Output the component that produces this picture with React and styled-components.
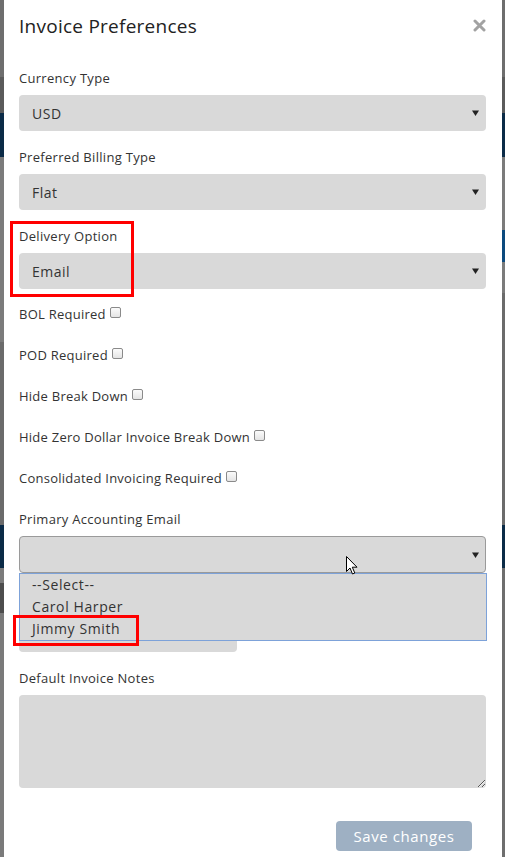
import React from "react";
import styled, { createGlobalStyle } from "styled-components";

const Global = createGlobalStyle`
  html, body { margin: 0; padding: 0; }
  body {
    min-height: 857px;
    font-family: "Open Sans", "Liberation Sans", sans-serif;
    background:
      linear-gradient(to bottom,
        #6e6e6e 0 77px, #5b5b5b 77px 113px, #0b2b47 113px 157px,
        #7b7b7b 157px 342px, #6b6b6b 342px 525px, #0b2b47 525px 568px,
        #7b7b7b 568px 583px, #4d4d4d 583px 613px, #7a7a7a 613px) left top / 50% 100% no-repeat,
      linear-gradient(to bottom,
        #6e6e6e 0 77px, #5b5b5b 77px 113px, #0b2b47 113px 157px,
        #7b7b7b 157px 230px, #0c4a7e 230px 262px, #7b7b7b 262px 293px,
        #6b6b6b 293px 525px, #0b2b47 525px 568px, #6e6e6e 568px) right top / 50% 100% no-repeat;
  }
`;

const Modal = styled.div`
  margin: 0 3px 0 4px;
  background: #fff;
  min-height: 857px;
  box-sizing: border-box;
  color: #333;
`;

const Header = styled.div`
  display: flex;
  align-items: center;
  justify-content: space-between;
  height: 52px;
  padding: 0 16px 0 15px;
  box-sizing: border-box;
`;

const Title = styled.h4`
  margin: 0;
  font-size: 19px;
  font-weight: 500;
  letter-spacing: 0.25px;
  color: #222;
  line-height: 22px;
`;

const Close = styled.button`
  border: 0;
  background: none;
  padding: 0;
  width: 13px;
  height: 13px;
  display: flex;
  margin-top: -2px;
`;

const Body = styled.div`
  padding: 17px 16px 0 15px;
`;

const Group = styled.div`
  position: relative;
  margin-bottom: ${(p) => (p.$mb != null ? p.$mb : 17)}px;
`;

const Label = styled.label`
  display: block;
  font-size: 13px;
  letter-spacing: 0.3px;
  line-height: 18px;
  margin-bottom: 8px;
  color: #333;
`;

const Select = styled.div`
  display: flex;
  align-items: center;
  justify-content: space-between;
  height: ${(p) => (p.$bordered ? 37 : 36)}px;
  box-sizing: border-box;
  background: #d9d9d9;
  border-radius: 4px;
  padding: 0 7px 0 13px;
  font-size: 14px;
  letter-spacing: 0.5px;
  color: #333;
  border: ${(p) => (p.$bordered ? "1px solid #9a9a9a" : "none")};
  ${(p) => p.$bordered && "padding-left: 12px; padding-right: 6px;"}
`;

const Input = styled.div`
  height: 36px;
  width: ${(p) => p.$w || "100%"};
  background: #d9d9d9;
  border-radius: 4px;
`;

const CheckRow = styled.div`
  display: flex;
  align-items: flex-start;
  gap: 4px;
  font-size: 13px;
  letter-spacing: 0.25px;
  line-height: 18px;
  height: 18px;
  margin-bottom: 23px;
`;

const Check = styled.input.attrs({ type: "checkbox" })`
  appearance: none;
  margin: 2px 0 0 0;
  width: 11px;
  height: 11px;
  box-sizing: border-box;
  border: 1px solid #8a8a8a;
  border-radius: 2px;
  background: linear-gradient(#fbfbfb, #e4e4e4);
`;

const Dropdown = styled.ul`
  position: absolute;
  left: 0;
  right: -1px;
  top: 100%;
  margin: 0;
  padding: 0;
  list-style: none;
  background: #d9d9d9;
  border: 1px solid #7da2d9;
  z-index: 2;
`;

const Option = styled.li`
  height: 22px;
  line-height: 22px;
  padding-left: 12px;
  font-size: 14px;
  letter-spacing: 0.6px;
  color: #333;
`;

const Highlight = styled.div`
  position: absolute;
  border: 3px solid #ff0000;
  box-sizing: border-box;
  pointer-events: none;
  z-index: 3;
`;

const Cursor = styled.svg`
  position: absolute;
  z-index: 4;
`;

const TextArea = styled.textarea`
  display: block;
  width: 100%;
  height: 93px;
  box-sizing: border-box;
  background: #d9d9d9;
  border: none;
  border-radius: 4px;
  resize: vertical;
`;

const Footer = styled.div`
  display: flex;
  justify-content: flex-end;
  padding: 33px 30px 0 0;
`;

const Button = styled.button`
  width: 136px;
  height: 30px;
  border: 0;
  border-radius: 4px;
  background: #9eb0c3;
  color: #fff;
  font-family: inherit;
  font-size: 15px;
  font-weight: 500;
  letter-spacing: 0.6px;
`;

const Arrow = () => (
  <svg width="7" height="6" viewBox="0 0 7 6">
    <path d="M0 0.5 H7 L3.5 6 Z" fill="#222" />
  </svg>
);

const SelectField = ({ label, value, mb }) => (
  <Group $mb={mb}>
    <Label>{label}</Label>
    <Select>
      <span>{value}</span>
      <Arrow />
    </Select>
  </Group>
);

export default function App() {
  return (
    <>
      <Global />
      <Modal>
        <Header>
          <Title>Invoice Preferences</Title>
          <Close aria-label="close">
            <svg width="13" height="13" viewBox="0 0 13 13">
              <path d="M2 2 L11 11 M11 2 L2 11" stroke="#a2a2a2" strokeWidth="3" strokeLinecap="round" />
            </svg>
          </Close>
        </Header>
        <Body>
          <SelectField label="Currency Type" value="USD" />
          <SelectField label="Preferred Billing Type" value="Flat" />
          <Group $mb={16}>
            <Label>Delivery Option</Label>
            <Select>
              <span>Email</span>
              <Arrow />
            </Select>
            <Highlight style={{ left: -9, top: -6, width: 124, height: 76 }} />
          </Group>
          {[
            "BOL Required",
            "POD Required",
            "Hide Break Down",
            "Hide Zero Dollar Invoice Break Down",
            "Consolidated Invoicing Required",
          ].map((t) => (
            <CheckRow key={t}>
              <span>{t}</span>
              <Check />
            </CheckRow>
          ))}
          <Group>
            <Label>Primary Accounting Email</Label>
            <Select $bordered>
              <span />
              <Arrow />
            </Select>
            <Dropdown>
              <Option>--Select--</Option>
              <Option>Carol Harper</Option>
              <Option>Jimmy Smith</Option>
              <Highlight style={{ left: -7, top: 41, width: 126, height: 31 }} />
            </Dropdown>
            <Cursor width="12" height="19" viewBox="0 0 12 19" style={{ left: 327, top: 46 }}>
              <path d="M0.5 0.5 V15.5 L4 12 L6.5 18 L8.8 17 L6.3 11.2 H11 Z" fill="#fff" stroke="#000" strokeWidth="1" />
            </Cursor>
          </Group>
          <Group>
            <Label>&nbsp;</Label>
            <Input $w="218px" />
          </Group>
          <Group $mb={0}>
            <Label>Default Invoice Notes</Label>
            <TextArea />
          </Group>
        </Body>
        <Footer>
          <Button>Save changes</Button>
        </Footer>
      </Modal>
    </>
  );
}
